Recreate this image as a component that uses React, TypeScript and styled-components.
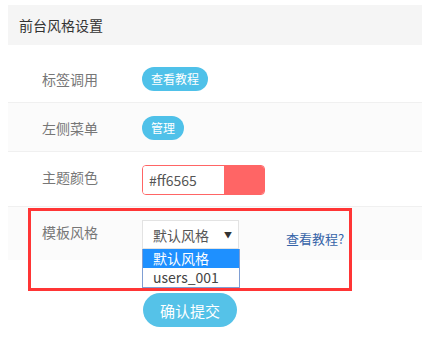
import React from "react";
import styled, { createGlobalStyle } from "styled-components";

const GlobalStyle = createGlobalStyle`
    body {
        margin: 0;
        background: #fff;
        font-family: "Noto Sans CJK SC", "Liberation Sans", sans-serif;
    }
`

const Page = styled.div`
    padding: 5px 0 0 8px;
`
const Header = styled.div`
    height: 40px;
    line-height: 40px;
    padding-left: 11px;
    background: #f5f5f5;
    color: #333;
    font-size: 14px;
`
const Form = styled.div`
    padding-top: 9px;
`
const Row = styled.div<{ $striped?: boolean }>`
    position: relative;
    display: flex;
    align-items: flex-start;
    padding: 13px 0 11px;
    background: ${p => (p.$striped ? "#fbfbfb" : "#fff")};
    & + & {
        border-top: 1px solid #f0f0f0;
    }
`
const Label = styled.div`
    width: 100px;
    padding-left: 34px;
    line-height: 24px;
    font-size: 14px;
    color: #777;
`
const PillButton = styled.button`
    height: 24px;
    padding: 0 9px;
    border: none;
    border-radius: 12px;
    background: #4fc1e9;
    color: #fff;
    font-family: inherit;
    font-size: 12px;
    line-height: 24px;
    cursor: pointer;
`
const ColorBox = styled.div`
    display: flex;
    width: 121px;
    height: 28px;
    border: 1px solid #ff6565;
    border-radius: 4px;
    overflow: hidden;
`
const ColorText = styled.div`
    flex: 1;
    padding-left: 6px;
    line-height: 28px;
    font-size: 14px;
    color: #555;
    background: #fff;
`
const Swatch = styled.div<{ $color: string }>`
    width: 40px;
    background: ${p => p.$color};
`
const SelectWrap = styled.div`
    position: relative;
`
const SelectBox = styled.div`
    display: flex;
    align-items: center;
    justify-content: space-between;
    box-sizing: border-box;
    width: 97px;
    height: 29px;
    padding: 0 6px 0 10px;
    border: 1px solid #e3e3e3;
    background: #fff;
    font-size: 14px;
    color: #555;
`
const Arrow = styled.span`
    font-size: 8px;
    color: #333;
`
const OptionList = styled.div`
    position: absolute;
    top: 29px;
    left: 0;
    z-index: 2;
    width: 96px;
    border: 1px solid #7f9ed3;
    border-top: none;
    background: #fff;
`
const Option = styled.div<{ $active?: boolean }>`
    height: 19px;
    line-height: 19px;
    padding-left: 10px;
    font-size: 14px;
    color: ${p => (p.$active ? "#fff" : "#444")};
    background: ${p => (p.$active ? "#1e90ff" : "#fff")};
`
const HelpLink = styled.a`
    margin: 9px 0 0 47px;
    line-height: 20px;
    font-size: 13px;
    color: #3563a8;
    text-decoration: none;
`
const Highlight = styled.div`
    position: absolute;
    top: 1px;
    left: 20px;
    width: 318px;
    height: 77px;
    border: 3px solid #ff3535;
    pointer-events: none;
`
const SubmitArea = styled.div`
    padding: 33px 0 0 135px;
`
const SubmitButton = styled.button`
    width: 94px;
    height: 34px;
    border: none;
    border-radius: 17px;
    background: #55c2e8;
    color: #fff;
    font-family: inherit;
    font-size: 15px;
    cursor: pointer;
`

const App = () => {
    return (
        <Page>
            <GlobalStyle />
            <Header>前台风格设置</Header>
            <Form>
                <Row>
                    <Label>标签调用</Label>
                    <PillButton>查看教程</PillButton>
                </Row>
                <Row $striped>
                    <Label>左侧菜单</Label>
                    <PillButton>管理</PillButton>
                </Row>
                <Row>
                    <Label>主题颜色</Label>
                    <ColorBox>
                        <ColorText>#ff6565</ColorText>
                        <Swatch $color="#ff6565" />
                    </ColorBox>
                </Row>
                <Row $striped>
                    <Label>模板风格</Label>
                    <SelectWrap>
                        <SelectBox>
                            默认风格
                            <Arrow>▼</Arrow>
                        </SelectBox>
                        <OptionList>
                            <Option $active>默认风格</Option>
                            <Option>users_001</Option>
                        </OptionList>
                    </SelectWrap>
                    <HelpLink href="#">查看教程?</HelpLink>
                    <Highlight />
                </Row>
            </Form>
            <SubmitArea>
                <SubmitButton>确认提交</SubmitButton>
            </SubmitArea>
        </Page>
    )
}

export default App;
